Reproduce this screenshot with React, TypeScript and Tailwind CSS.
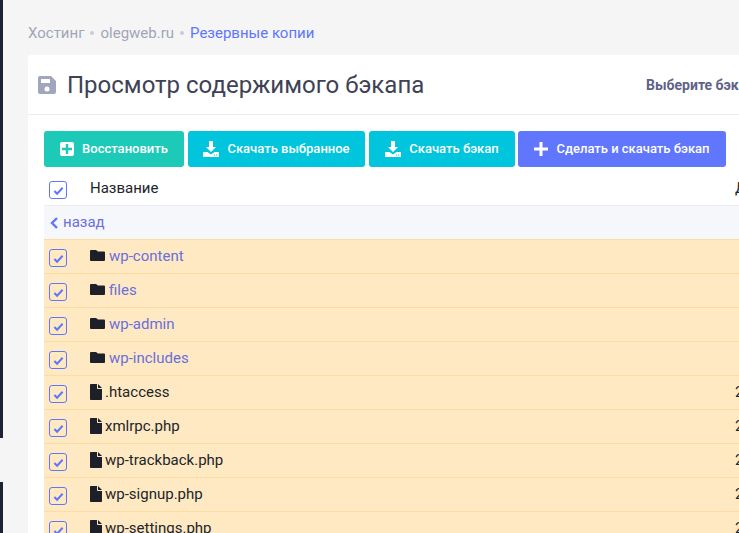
import React from "react";

const rows = [
  { name: "wp-content", dir: true },
  { name: "files", dir: true },
  { name: "wp-admin", dir: true },
  { name: "wp-includes", dir: true },
  { name: ".htaccess", dir: false },
  { name: "xmlrpc.php", dir: false },
  { name: "wp-trackback.php", dir: false },
  { name: "wp-signup.php", dir: false },
  { name: "wp-settings.php", dir: false },
];

function Check() {
  return (
    <span className="mt-[3px] flex h-[18px] w-[18px] shrink-0 items-center justify-center rounded-[3px] border border-[#5f76fd]">
      <svg viewBox="0 0 12 12" className="h-[11px] w-[11px]" fill="none" stroke="#5f76fd" strokeWidth="2.200">
        <path d="M1.500 6.500 4.500 9.500 10.500 3" />
      </svg>
    </span>
  );
}

function FolderIcon() {
  return (
    <svg viewBox="0 0 15 11" className="-mt-[2px] h-[11px] w-[15px] shrink-0" fill="#1e2029">
      <path d="M1 0h5l2 1.500h6a1 1 0 0 1 1 1V10a1 1 0 0 1-1 1H1a1 1 0 0 1-1-1V1a1 1 0 0 1 1-1z" />
    </svg>
  );
}

function FileIcon() {
  return (
    <svg viewBox="0 0 12 16" className="-mt-[2px] h-4 w-3 shrink-0" fill="#1e2029">
      <path d="M0 .8C0 .4.4 0 .8 0H7v4.200c0 .4.4.8.8.8H12v10.200c0 .4-.4.8-.8.8H.8c-.4 0-.8-.4-.8-.8z" />
      <path d="M8 0l4 4H8z" />
    </svg>
  );
}

function DownloadIcon() {
  return (
    <svg viewBox="0 0 16 16" className="h-4 w-4 shrink-0" fill="#fff">
      <path d="M6 0h4v6h3l-5 5-5-5h3z" />
      <path d="M0 11h4.500l3.500 2.500L11.500 11H16v5H0z" />
      <path d="M11 13.500h1v1h-1zM13 13.500h1v1h-1z" fill="#00c5dc" />
    </svg>
  );
}

function PlusIcon() {
  return (
    <svg viewBox="0 0 14 14" className="h-[14px] w-[14px] shrink-0" fill="#fff">
      <path d="M5.500 0h3v5.500H14v3H8.500V14h-3V8.500H0v-3h5.500z" />
    </svg>
  );
}

function ToolButton({ width, color, icon, label, gap }: { width: string; color: string; icon: React.ReactNode; label: string; gap: string }) {
  return (
    <button type="button" className={`flex h-9 shrink-0 items-center justify-center rounded-[3px] text-[13px] font-medium text-white ${gap} ${width} ${color}`}>
      {icon}
      <span>{label}</span>
    </button>
  );
}

export default function App() {
  return (
    <div className="flex h-[533px] w-[739px] overflow-hidden bg-[#f5f5f6] font-['Roboto',sans-serif]">
      {/* Sidebar edge */}
      <div className="flex w-[3px] shrink-0 flex-col">
        <div className="h-[438px] bg-[#1e2235]" />
        <div className="h-[44px]" />
        <div className="flex-1 bg-[#1e2235]" />
      </div>

      <main className="min-w-0 flex-1 pl-[25px] pt-6">
        <nav className="flex h-[18px] items-center gap-[6px] text-[15px] text-[#a1a5b7]">
          <span>Хостинг</span>
          <span className="h-1 w-1 rounded-full bg-[#c9cbd8]" />
          <span>olegweb.ru</span>
          <span className="h-1 w-1 rounded-full bg-[#c9cbd8]" />
          <span className="text-[#5f76fd]">Резервные копии</span>
        </nav>

        <section className="mt-[13px] w-[900px] rounded-[4px] bg-white">
          <header className="flex h-[60px] items-center border-b border-[#ebedf3] pl-[10px]">
            <svg viewBox="0 0 18 18" className="h-[18px] w-[18px] shrink-0" fill="#a1a5c0">
              <path d="M2 0h11l5 5v11a2 2 0 0 1-2 2H2a2 2 0 0 1-2-2V2a2 2 0 0 1 2-2zm1 3v4h9V3zm6 7.500a2.500 2.500 0 1 0 0 5 2.500 2.500 0 0 0 0-5z" fillRule="evenodd" />
            </svg>
            <h1 className="ml-[11px] w-[579px] shrink-0 text-2xl leading-none text-[#3f4254]">Просмотр содержимого бэкапа</h1>
            <span className="text-sm font-bold text-[#5e6288]">Выберите бэкап</span>
          </header>

          <div className="px-4 pt-4">
            <div className="flex gap-1">
              <ToolButton
                width="w-[140px]"
                color="bg-[#1dc9b7]"
                gap="gap-2"
                label="Восстановить"
                icon={
                  <span className="flex h-[14px] w-[14px] items-center justify-center rounded-[2px] bg-white">
                    <svg viewBox="0 0 10 10" className="h-[10px] w-[10px]" fill="#1dc9b7">
                      <path d="M3.800 0h2.400v3.800H10v2.400H6.200V10H3.800V6.200H0V3.800h3.800z" />
                    </svg>
                  </span>
                }
              />
              <ToolButton width="w-[177px]" color="bg-[#00c5dc]" gap="gap-2" label="Скачать выбранное" icon={<DownloadIcon />} />
              <ToolButton width="w-[146px]" color="bg-[#00c5dc]" gap="gap-2" label="Скачать бэкап" icon={<DownloadIcon />} />
              <ToolButton width="-ml-px w-[208px]" color="bg-[#5f76fd]" gap="gap-[8px]" label="Сделать и скачать бэкап" icon={<PlusIcon />} />
            </div>

            <div className="mt-[5px] text-[15px] text-[#212529]">
              <div className="flex h-[34px] items-center border-b border-[#ebedf3] pl-[5px]">
                <Check />
                <span className="ml-[23px] w-[645px] shrink-0">Название</span>
                <span>Дата</span>
              </div>
              <div className="flex h-[33px] items-center gap-[5px] bg-[#f6f7fa] pl-[6px] text-[#6a6fdc]">
                <svg viewBox="0 0 8 12" className="h-3 w-2" fill="none" stroke="#5f76fd" strokeWidth="2.400">
                  <path d="M7 1 2 6l5 5" />
                </svg>
                <span>назад</span>
              </div>
              {rows.map((row) => (
                <div key={row.name} className="flex h-[34px] items-center border-t border-[#fcdca0] bg-[#fee9c3] pl-[5px]">
                  <Check />
                  <span className={`ml-[23px] flex w-[645px] shrink-0 items-center ${row.dir ? "gap-1" : "gap-[3px]"}`}>
                    {row.dir ? <FolderIcon /> : <FileIcon />}
                    <span className={row.dir ? "text-[#6a6fdc]" : ""}>{row.name}</span>
                  </span>
                  {!row.dir && <span>2021</span>}
                </div>
              ))}
            </div>
          </div>
        </section>
      </main>
    </div>
  );
}
